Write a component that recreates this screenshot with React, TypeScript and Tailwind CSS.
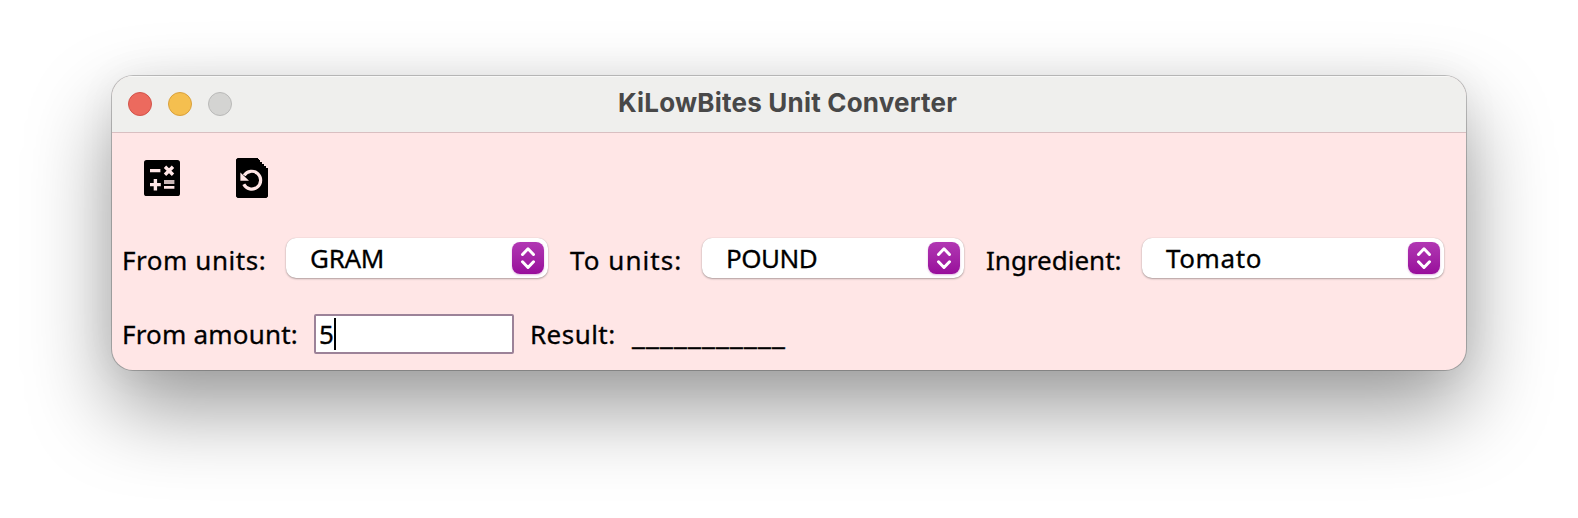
import React from "react";

function Dot({ c }: { c: string }) {
  return <span className={"h-6 w-6 rounded-full border " + c} />;
}

function Label({ children, c }: { children: React.ReactNode; c: string }) {
  return <span className={"block shrink-0 whitespace-nowrap " + c}>{children}</span>;
}

function Combo({ value, c, t }: { value: string; c: string; t: string }) {
  return (
    <div className={"flex h-10 shrink-0 items-center justify-between rounded-[10px] bg-white pr-1 pl-6 shadow-[0_1px_2px_rgba(0,0,0,0.3),0_0_1px_rgba(0,0,0,0.2)] " + c}>
      <span className={"whitespace-nowrap " + t}>{value}</span>
      <span className="flex h-8 w-8 items-center justify-center rounded-lg bg-linear-to-b from-[#b137b3] to-[#980b9b] shadow-[0_1px_2px_rgba(152,11,155,0.3)]">
        <svg width="32" height="32" viewBox="0 0 32 32" fill="none" stroke="white" strokeWidth="3" strokeLinecap="round" strokeLinejoin="round">
          <path d="M10.500 12.500 16 6.800l5.500 5.700M10.500 19.800 16 25.500l5.500-5.700" />
        </svg>
      </span>
    </div>
  );
}

export default function App() {
  return (
    <div className="flex h-[518px] w-[1578px] items-start overflow-hidden bg-white pt-[76px] pl-[112px] font-['Noto_Sans',sans-serif] text-[26px] leading-[36px] text-black">
      <div className="flex h-[294px] w-[1354px] flex-col overflow-hidden rounded-[21px] bg-[#ffe6e6] shadow-[0_0_0_1px_rgba(0,0,0,0.22),0_38px_84px_rgba(0,0,0,0.4),0_0_40px_rgba(0,0,0,0.05)]">
        <div className="grid h-[57px] shrink-0 grid-cols-[1fr_auto_1fr] items-center border-b border-[#d9bfc1] bg-[#efefed] px-4 shadow-[inset_0_1px_0_#f8f8f7]">
          <div className="flex gap-4">
            <Dot c="border-[#d2534a] bg-[#ec6a5e]" />
            <Dot c="border-[#d9a03c] bg-[#f5bf4f]" />
            <Dot c="border-[#b9b9b8] bg-[#d4d4d2]" />
          </div>
          <h1 className="pr-[3px] pb-0.5 font-['Inter',sans-serif] text-[26px] font-bold tracking-[0.2px] text-[#484848]">KiLowBites Unit Converter</h1>
        </div>
        <div className="flex h-[105px] shrink-0 items-start gap-14 pt-[25px] pl-8">
          <svg className="mt-0.5" width="36" height="36" viewBox="0 0 18 18">
            <rect width="18" height="18" rx="1.300" />
            <path fill="none" stroke="#ffe6e6" strokeWidth="1.700" d="M3 5.300h5.200M3 12.300h5.400M5.700 9.500v5.800M10.500 3.400l4 4M14.500 3.400l-4 4" />
            <path fill="#c9b6b6" d="M10 10h5.200v2H10z" />
            <path fill="#ffe6e6" d="M10 13h5.200v1.400H10z" />
          </svg>
          <svg width="32" height="40" viewBox="0 0 16 20">
            <path d="M1 0h10v.5h.5V1h.5v1h1v1h1v1h1v1h1v14.200l-.8.8H.8l-.8-.8V.800L.800 0z" />
            <path fill="none" stroke="#ffe6e6" strokeWidth="1.600" d="M4.100 8.700A4.450 4.450 0 1 1 3.900 13.100" />
            <path fill="#ffe6e6" d="M2.200 7.200v4.200h4.300z" />
          </svg>
        </div>
        <div className="flex h-[40px] shrink-0 items-center pl-[10px] [-webkit-text-stroke:0.300px_black]">
          <Label c="w-[164px] pt-[3px] tracking-[0.55px]">From units:</Label>
          <Combo value="GRAM" c="w-[262px]" t="tracking-[-0.3px]" />
          <Label c="ml-[22px] w-[132px] pt-[3px] tracking-[1.05px]">To units:</Label>
          <Combo value="POUND" c="w-[262px]" t="tracking-[-0.5px]" />
          <Label c="ml-[22px] w-[156px] pt-[3px]">Ingredient:</Label>
          <Combo value="Tomato" c="w-[302px]" t="tracking-[0.6px]" />
        </div>
        <div className="mt-9 flex h-10 shrink-0 items-center pl-[10px] [-webkit-text-stroke:0.300px_black]">
          <Label c="w-[192px] tracking-[0.2px]">From amount:</Label>
          <div className="flex h-10 w-[200px] shrink-0 items-center rounded-[2px] border-2 border-[#9c8298] bg-white pl-[3px]">
            <span>5</span>
            <span className="h-8 w-0.5 bg-black" />
          </div>
          <Label c="ml-4 w-[102px] tracking-[0.45px]">Result:</Label>
          <Label c="pb-[3px] text-[29px] tracking-[1.12px]">___________</Label>
        </div>
      </div>
    </div>
  );
}
